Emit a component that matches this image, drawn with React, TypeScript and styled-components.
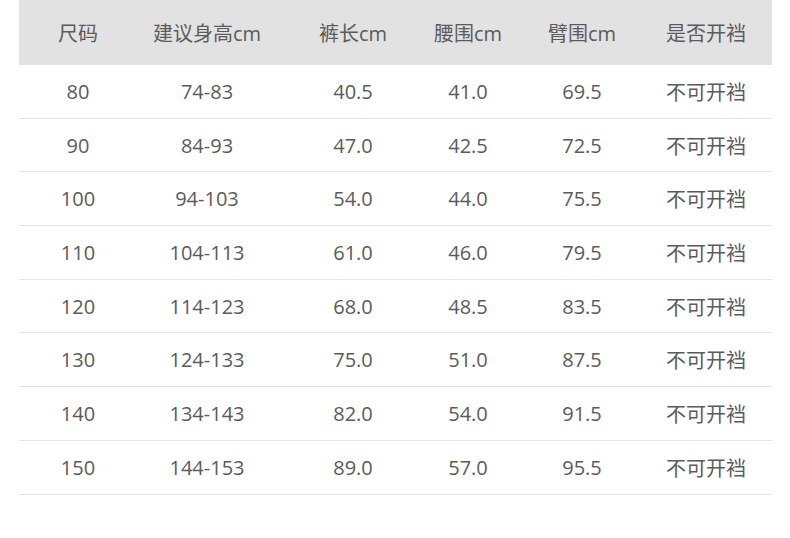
import React from "react";
import styled, { createGlobalStyle } from "styled-components";

const GlobalStyle = createGlobalStyle`
    body {
        margin: 0;
        background: #ffffff;
        font-family: "Open Sans", "Noto Sans CJK SC", sans-serif;
    }
`

const Page = styled.div({
    width: 790,
    height: 538,
    padding: '0 18px 0 19px',
    boxSizing: 'border-box',
})

const Table = styled.div({
    display: 'grid',
    gridTemplateColumns: '118px 140px 152px 78px 150px 98px 1fr',
    color: '#5b5b5b',
    fontSize: 20,
})

const HeadRow = styled.div({
    display: 'contents',
})

const HeadCell = styled.div({
    height: 65,
    background: '#e2e2e2',
    display: 'flex',
    alignItems: 'center',
    justifyContent: 'center',
    whiteSpace: 'nowrap',
    paddingBottom: 1,
    boxSizing: 'border-box',
})

const Row = styled.div({
    display: 'contents',
})

const Cell = styled.div({
    height: 53.7,
    borderBottom: '1px solid #e6e6e6',
    display: 'flex',
    alignItems: 'center',
    justifyContent: 'center',
    whiteSpace: 'nowrap',
    boxSizing: 'border-box',
})

const headers = ['尺码', '建议身高cm', '裤长cm', '腰围cm', '臂围cm', '是否开裆']

const rows = [
    ['80', '74-83', '40.5', '41.0', '69.5', '不可开裆'],
    ['90', '84-93', '47.0', '42.5', '72.5', '不可开裆'],
    ['100', '94-103', '54.0', '44.0', '75.5', '不可开裆'],
    ['110', '104-113', '61.0', '46.0', '79.5', '不可开裆'],
    ['120', '114-123', '68.0', '48.5', '83.5', '不可开裆'],
    ['130', '124-133', '75.0', '51.0', '87.5', '不可开裆'],
    ['140', '134-143', '82.0', '54.0', '91.5', '不可开裆'],
    ['150', '144-153', '89.0', '57.0', '95.5', '不可开裆'],
]

export default function App() {
    return <Page>
        <GlobalStyle />
        <Table>
            <HeadRow>
                {headers.map(h => <HeadCell key={h}>{h}</HeadCell>)}
                <HeadCell />
            </HeadRow>
            {rows.map(r => <Row key={r[0]}>
                {r.map((v, i) => <Cell key={i}>{v}</Cell>)}
                <Cell />
            </Row>)}
        </Table>
    </Page>
}
